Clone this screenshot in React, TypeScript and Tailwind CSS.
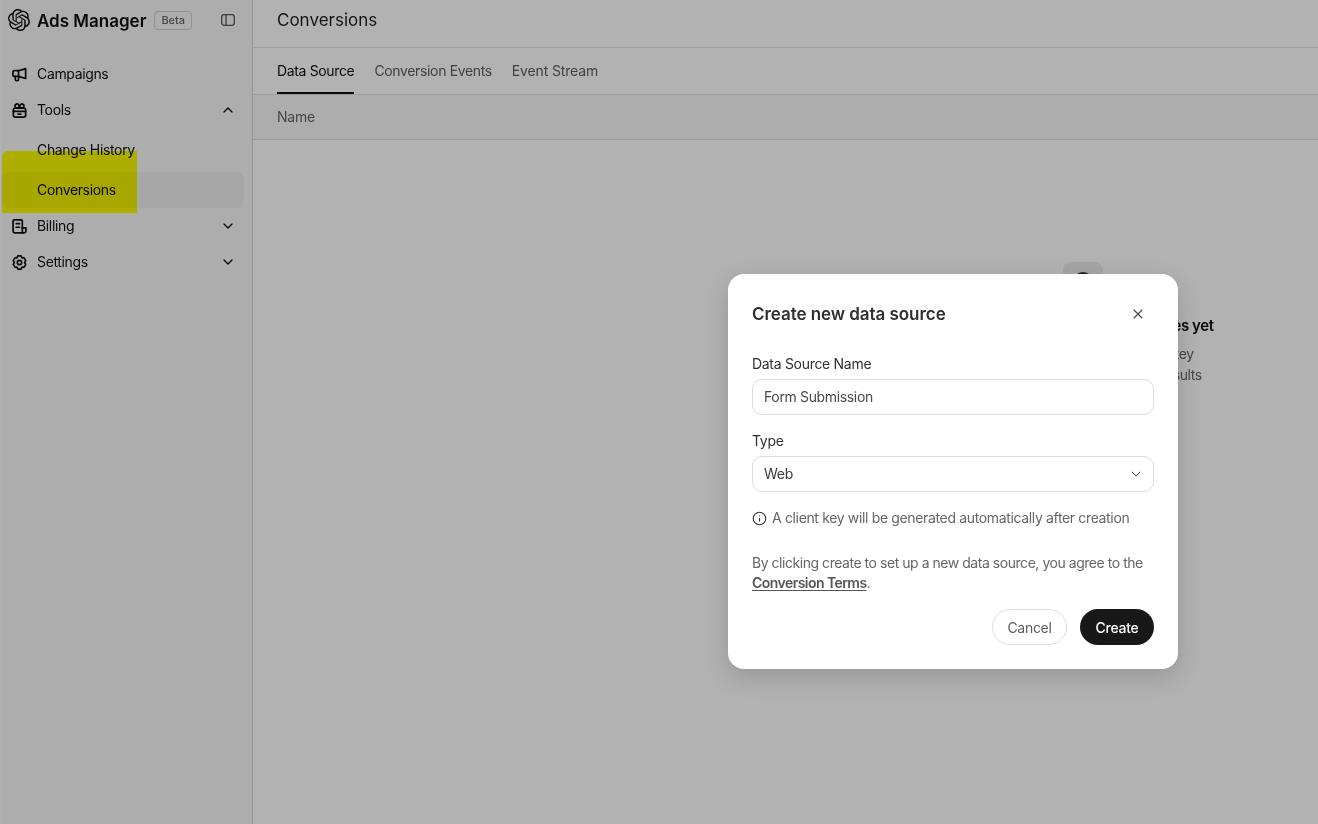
import { SiOpenai } from "react-icons/si"
import { ChevronDown, ChevronUp, Info, X } from "lucide-react"

function Megaphone() {
  return (
    <svg width="17" height="17" viewBox="0 0 18 18" fill="none" stroke="currentColor" strokeWidth="1.8" strokeLinejoin="round" strokeLinecap="round">
      <path d="M15.5 2.8v10.4L8 11H3.600A1.600 1.600 0 0 1 2 9.400V6.600A1.600 1.600 0 0 1 3.600 5H8z" />
      <path d="M8 5v6" />
      <path d="M4.500 11v3a1.600 1.600 0 0 0 1.600 1.600h.4A1.500 1.500 0 0 0 8 14.100V11" />
    </svg>
  )
}

function ToolsIcon() {
  return (
    <svg width="17" height="17" viewBox="0 0 18 18" fill="none" stroke="currentColor" strokeWidth="1.8" strokeLinejoin="round" strokeLinecap="round">
      <rect x="2.500" y="6.500" width="13" height="9.500" rx="2" />
      <path d="M2.500 10h13" />
      <path d="M7.500 12.800h3" />
      <path d="M9 6.500H6.400a2.200 2.200 0 1 1 1.900-3.300z" />
      <path d="M9 6.500h2.600a2.200 2.200 0 1 0-1.900-3.300L9 6.500z" />
    </svg>
  )
}

function BillingIcon() {
  return (
    <svg width="17" height="17" viewBox="0 0 18 18" fill="none" stroke="currentColor" strokeWidth="1.8" strokeLinejoin="round" strokeLinecap="round">
      <path d="M12 15.800H3.900a1.700 1.700 0 0 1-1.700-1.700V3.300q0-1.300 1.300-1.300h7.100q1.400 0 1.400 1.300z" />
      <path d="M12 10.500h3.800v3.600a1.700 1.700 0 0 1-1.700 1.700H12" />
      <path d="M5.500 6h3.500" />
      <path d="M5.500 9.800h3.500" />
    </svg>
  )
}

function SettingsIcon() {
  return (
    <svg width="17" height="17" viewBox="0 0 18 18" fill="none" stroke="currentColor" strokeWidth="1.8" strokeLinejoin="round" strokeLinecap="round">
      <path d="M7.300 2h3.400l1 2 2.200.1 1.700 2.900-1.200 2 1.200 2-1.700 2.900-2.200.1-1 2H7.300l-1-2-2.200-.1L2.400 11l1.200-2-1.200-2 1.700-2.900L6.300 4z" />
      <circle cx="9" cy="9" r="2.300" />
    </svg>
  )
}

function PanelIcon() {
  return (
    <svg width="16" height="16" viewBox="0 0 16 16" fill="none" stroke="currentColor" strokeWidth="1.3">
      <rect x="1.700" y="2.700" width="12.600" height="10.600" rx="2.500" />
      <path d="M6 2.700v10.600" />
    </svg>
  )
}

function NavRow({ icon, label, chevron }: { icon: React.ReactNode; label: string; chevron?: "up" | "down" }) {
  return (
    <div className="flex h-9 items-center rounded-lg pl-[10px] pr-2 text-[14px] tracking-[-0.35px] text-[#0d0d0d]">
      <span className="w-[17px] shrink-0">{icon}</span>
      <span className="ml-[9px] flex-1 pb-px">{label}</span>
      {chevron === "up" && <ChevronUp size={16} strokeWidth={2} />}
      {chevron === "down" && <ChevronDown size={16} strokeWidth={2} />}
    </div>
  )
}

export default function App() {
  return (
    <div className="relative flex h-[824px] w-[1318px] overflow-hidden bg-white font-['Inter','Liberation_Sans',sans-serif] text-[#0d0d0d]">
      <aside className="ml-px flex w-[252px] shrink-0 flex-col border-r border-[#d4d4d4] bg-[#f8f8f8]">
        <div className="flex h-10 items-center pl-[7px] pr-[16px]">
          <SiOpenai size={22} className="shrink-0" />
          <span className="ml-[7px] pt-[2px] text-[17px] font-semibold leading-none">Ads Manager</span>
          <span className="ml-2 rounded border border-[#d0d0d0] px-[6px] py-[2px] text-[11px] font-medium leading-[13px] text-[#666]">Beta</span>
          <span className="ml-auto text-[#555]"><PanelIcon /></span>
        </div>
        <nav className="mt-4 flex flex-col pr-2">
          <NavRow icon={<Megaphone />} label="Campaigns" />
          <NavRow icon={<ToolsIcon />} label="Tools" chevron="up" />
          <div className="flex h-11 items-center pb-px pl-9 text-[14px] tracking-[-0.35px]">Change History</div>
          <div className="flex h-9 items-center rounded-lg bg-[#f0f0f0] pb-px pl-9 text-[14px] tracking-[-0.35px]">Conversions</div>
          <NavRow icon={<BillingIcon />} label="Billing" chevron="down" />
          <NavRow icon={<SettingsIcon />} label="Settings" chevron="down" />
        </nav>
      </aside>

      <main className="relative flex min-w-0 flex-1 flex-col">
        <header className="flex h-12 items-center border-b border-[#e2e2e2] px-6 pb-[5px] text-[17px] text-[#1c1c1c]">Conversions</header>
        <div className="flex h-[47px] items-end gap-5 border-b border-[#dedede] px-6 text-[14px] tracking-[-0.35px] text-[#5d5d5d]">
          <div className="flex h-[46px] items-center border-b-2 border-[#0d0d0d] text-[#0d0d0d]">Data Source</div>
          <div className="flex h-[46px] items-center pb-[2px]">Conversion Events</div>
          <div className="flex h-[46px] items-center pb-[2px] tracking-[-0.15px]">Event Stream</div>
        </div>
        <div className="flex h-[45px] items-center border-b border-[#dedede] bg-[#f8f8f8] px-6 pb-[2px] text-[14px] tracking-[-0.2px] text-[#666]">Name</div>
        <div className="flex w-full flex-col items-center pl-[595px] pt-[122px] text-center">
          <div className="flex h-10 w-10 items-center justify-center rounded-lg bg-[#ececec]">
            <div className="h-5 w-5 rounded-full bg-[#333]" />
          </div>
          <div className="mt-[13px] whitespace-nowrap text-[15px] font-semibold tracking-[-0.42px] text-[#0d0d0d]">No active conversion data sources yet</div>
          <div className="mt-[5px] whitespace-nowrap text-[14px] leading-[21px] tracking-[-0.4px] text-[#666]">Add a data source to track your key<br />conversions and measure your results</div>
        </div>
      </main>

      <div className="absolute inset-0 bg-black/30" />
      <div className="absolute left-[2px] top-[151px] h-[62px] w-[135px] rounded-tl-md bg-[#ffff00] mix-blend-multiply" />

      <div className="absolute left-[728px] top-[274px] w-[450px] rounded-2xl bg-white px-6 pb-6 pt-[26px] shadow-[0_8px_24px_rgba(0,0,0,0.16)]">
        <div className="flex items-center justify-between">
          <h2 className="text-[17px] font-semibold leading-7 tracking-[-0.05px] text-[#2f2f2f]">Create new data source</h2>
          <X size={16} strokeWidth={1.6} className="mr-[8px] text-[#444]" />
        </div>
        <label className="mt-[26px] block text-[14px] leading-5 tracking-[-0.3px] text-[#2f2f2f]">Data Source Name</label>
        <div className="mt-[5px] flex h-9 items-center rounded-[10px] border border-[#dcdcdc] px-[11px] pb-px text-[14px] tracking-[-0.35px] text-[#4a4a4a]">Form Submission</div>
        <label className="mt-[16px] block text-[14px] leading-5 tracking-[-0.3px] text-[#2f2f2f]">Type</label>
        <div className="mt-[5px] flex h-9 items-center justify-between rounded-[10px] border border-[#dcdcdc] pb-px pl-[11px] pr-[9px] text-[14px] tracking-[-0.3px] text-[#3a3a3a]">
          Web
          <ChevronDown size={16} strokeWidth={1.5} className="text-[#444]" />
        </div>
        <div className="mt-[16px] flex items-center gap-[5px] text-[14px] leading-5 tracking-[-0.35px] text-[#666]">
          <Info size={15} strokeWidth={1.8} className="text-[#2f2f2f]" />
          A client key will be generated automatically after creation
        </div>
        <p className="mt-[25px] text-[14px] leading-5 tracking-[-0.46px] text-[#666]">
          By clicking create to set up a new data source, you agree to the <span className="font-semibold tracking-[-0.55px] text-[#555] underline underline-offset-2">Conversion Terms</span>.
        </p>
        <div className="mt-[16px] flex justify-end gap-[13px]">
          <button className="h-9 w-[75px] rounded-full border border-[#dedede] text-[14px] tracking-[-0.3px] text-[#5d5d5d]">Cancel</button>
          <button className="h-9 w-[74px] rounded-full bg-[#181818] text-[14px] font-medium tracking-[-0.3px] text-white">Create</button>
        </div>
      </div>
    </div>
  )
}
